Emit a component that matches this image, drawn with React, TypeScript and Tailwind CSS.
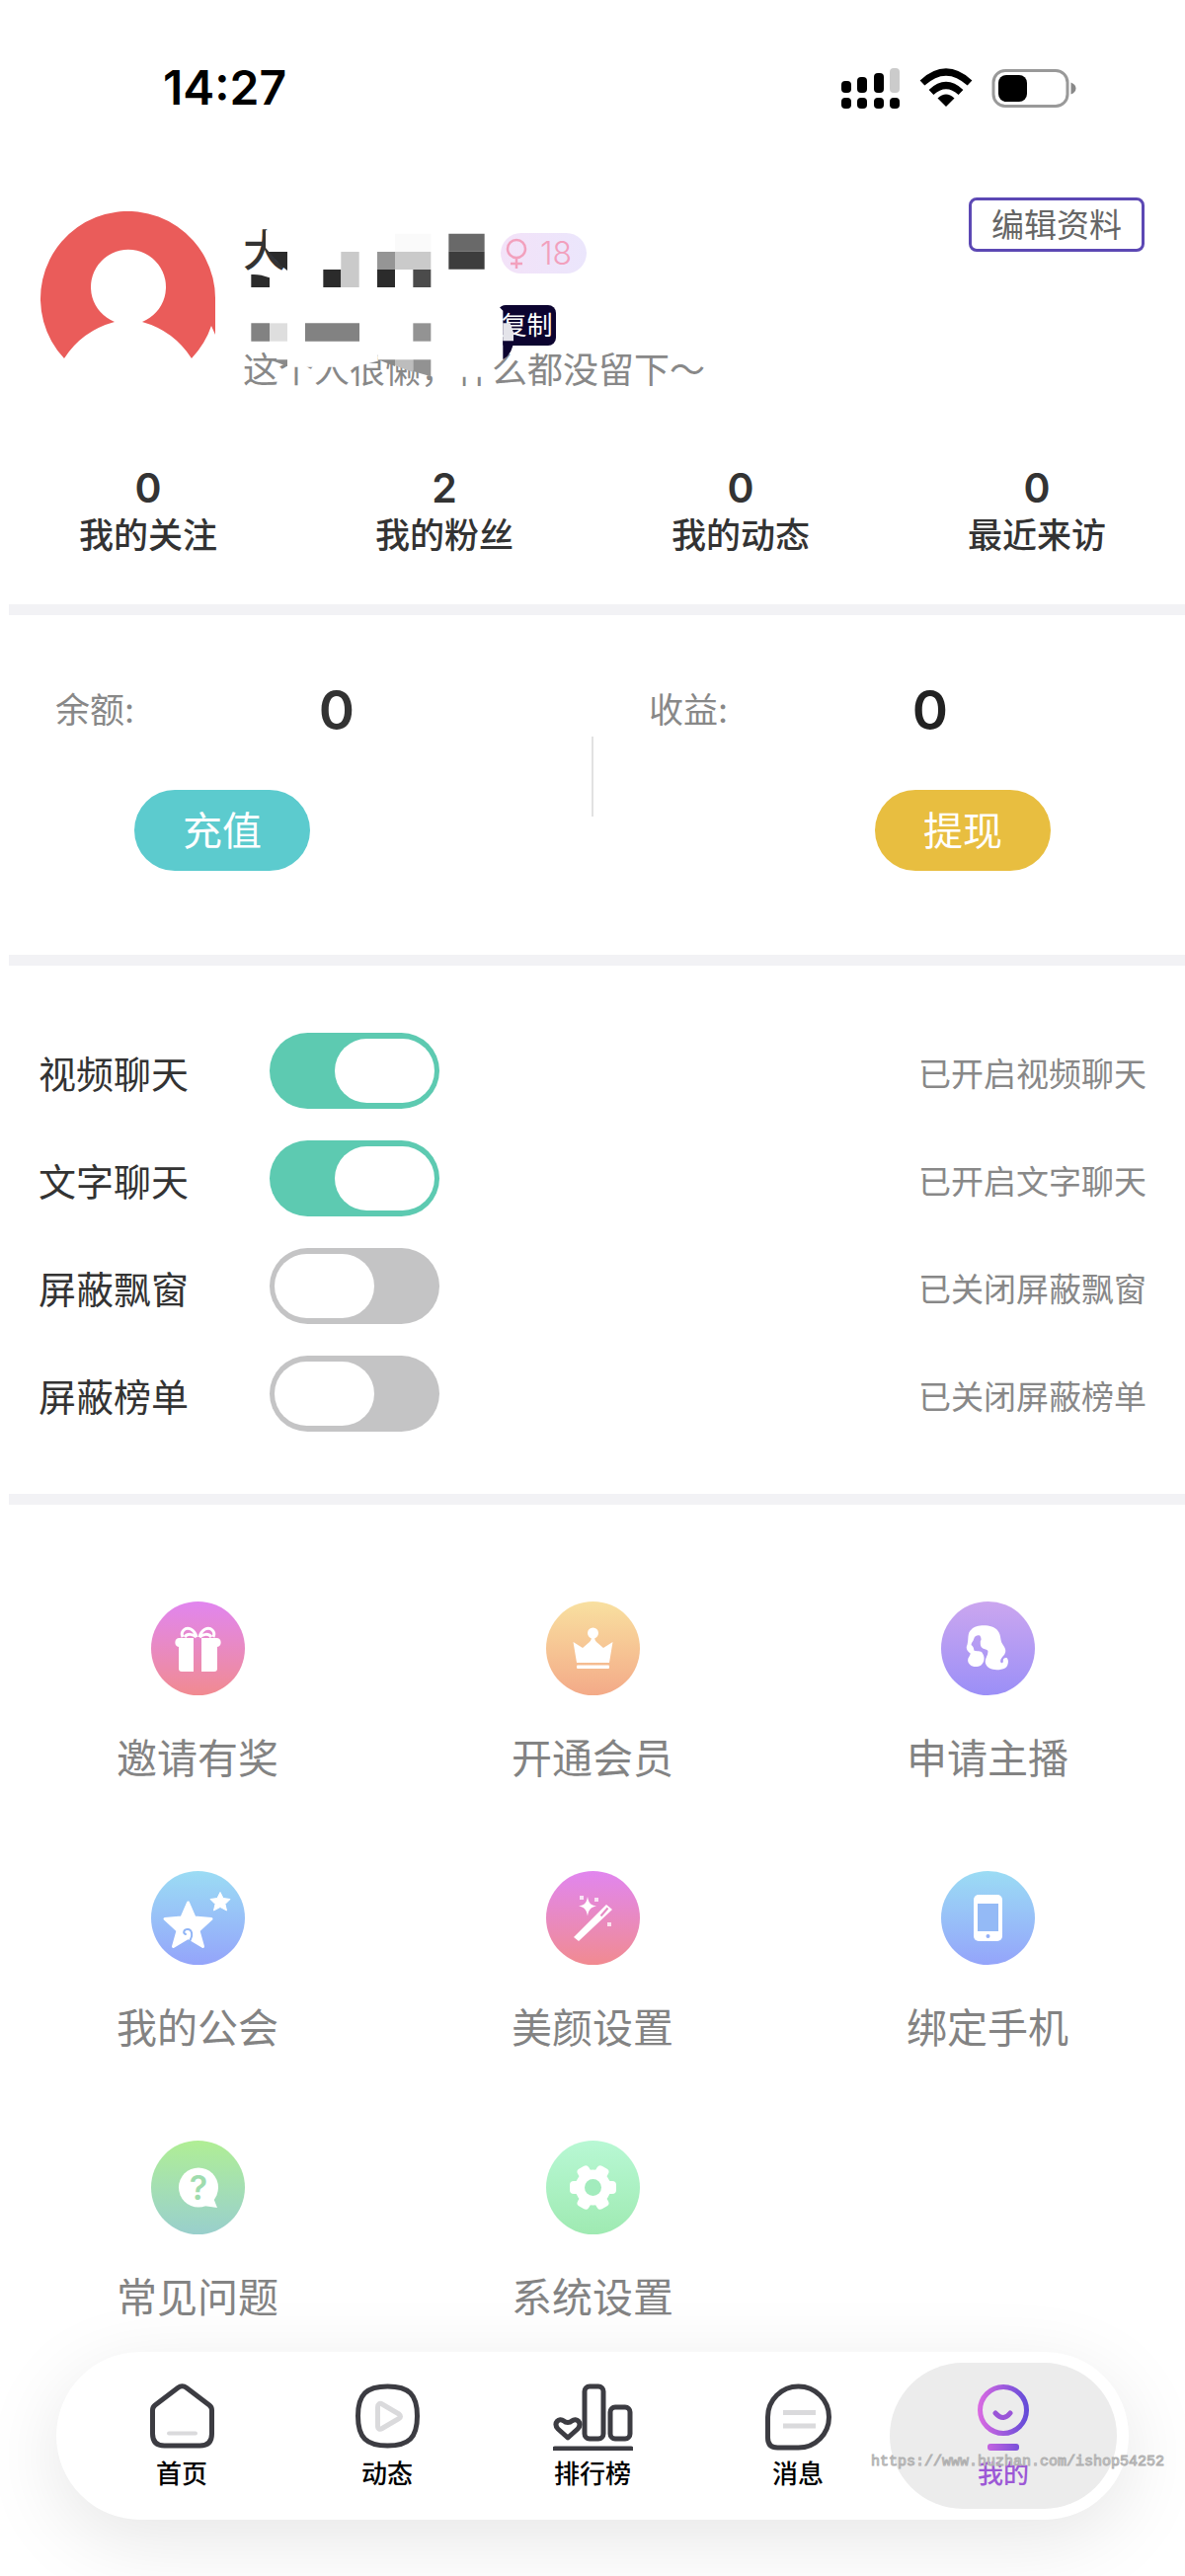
import { useState } from "react";
import type { ReactNode } from "react";
import clsx from "clsx";

const stats = [
  { label: "我的关注", value: 0 },
  { label: "我的粉丝", value: 2 },
  { label: "我的动态", value: 0 },
  { label: "最近来访", value: 0 },
];

const initialSwitches = [
  { id: "video", label: "视频聊天", on: true },
  { id: "text", label: "文字聊天", on: true },
  { id: "float", label: "屏蔽飘窗", on: false },
  { id: "rank", label: "屏蔽榜单", on: false },
];

const menu: { label: string; bg: string; icon: ReactNode }[] = [
  {
    label: "邀请有奖",
    bg: "from-[#e185ef] to-[#f18a90]",
    icon: (
      <>
        <path d="M28 37h15v34H31a3 3 0 0 1-3-3V46a4.600 4.600 0 0 1 0-9zM51 37h16a4.600 4.600 0 0 1 0 9v22a3 3 0 0 1-3 3H51z" fill="#fff" />
        <path d="M46 36c-2-8-9-11-13-7-2 2-2 5-1 7M49 36c2-8 9-11 13-7 2 2 2 5 1 7M34 36c3-4 8-3 12 0M61 36c-3-4-8-3-12 0" fill="none" stroke="#fff" strokeWidth="3" />
      </>
    ),
  },
  {
    label: "开通会员",
    bg: "from-[#f8e0a0] to-[#f3aa88]",
    icon: (
      <g fill="#fff">
        <circle cx="47.500" cy="32" r="5.500" />
        <path d="M27.500 41l9.500 6 7-6c2-2 2-4 2-6h3c0 2 0 4 2 6l7 6 9.500-6-3.500 21H31z" />
        <rect x="31" y="64.500" width="33" height="3.500" rx="1" />
      </g>
    ),
  },
  {
    label: "申请主播",
    bg: "from-[#cba6ef] to-[#9b8ff7]",
    icon: (
      <g transform="translate(-12.500 -12) scale(.3333)">
        <path
          d="M130 121c14-16 64-17 80 4 11 15 6 27 14 40 8 12 13 20 6 32-7 8-13 14-12 22 2 6 9 4 8-3-1-6 5-10 11-9 8 8 4 25-4 31-24 11-56 6-61-16-2-14 8-21 8-34 0-8-14-5-20-13-4-6-3-12-3-19 4-3 2-10-1-16-8-3-18 2-19 10-2 7-8 12-8 18 4 3 6 6 7 9l2 8c12 3 24 0 26 10 10 14 2 38-18 39-22 2-34-17-23-31l4-9c-12-7-15-18-10-27 5-15-1-36 13-46z"
          fill="#fff"
        />
      </g>
    ),
  },
  {
    label: "我的公会",
    bg: "from-[#9bdcf4] to-[#94a4fa]",
    icon: (
      <>
        <path
          d="M37.500 32l6.500 15 17 1.500-13 12 4.500 16-15-9-15 9 4.500-16-13-12L31 47z"
          fill="#fff"
          stroke="#fff"
          strokeWidth="3"
          strokeLinejoin="round"
        />
        <path d="M70 21.500l3 6 7 1-5 5 1.500 6.500-6.500-3.500-6.500 3.500 1.500-6.500-5-5 7-1z" fill="#fff" stroke="#fff" strokeWidth="1" strokeLinejoin="round" />
        <path d="M35 64c-3-1-2-5 2-5 5 0 5 7 3 10-1 2-2 3-1 5" fill="none" stroke="#8fb4f6" strokeWidth="2" strokeLinecap="round" />
      </>
    ),
  },
  {
    label: "美颜设置",
    bg: "from-[#e185ef] to-[#f18a90]",
    icon: (
      <g fill="#fff">
        <path d="M28 67L61 34l6 5-34 32z" />
        <path d="M62.500 37.500l-7 8" stroke="#e589c4" strokeWidth="2" />
        <path d="M42 26c1 6 3 8.500 9 9.500-6 1-8 4-9 10-1-6-3-9-9-10 6-1 8-3.500 9-9.500z" />
        <path d="M34 25h4v4h-4zM49 27h4v4h-4zM62 52h4v4h-4z" opacity=".75" />
      </g>
    ),
  },
  {
    label: "绑定手机",
    bg: "from-[#9bdcf4] to-[#94a4fa]",
    icon: (
      <>
        <rect x="33" y="24" width="29" height="47" rx="5" fill="#fff" />
        <path d="M37 33h21v28H37z" fill="#94baf6" />
        <circle cx="47.500" cy="66" r="2" fill="#94b0f8" />
      </>
    ),
  },
  {
    label: "常见问题",
    bg: "from-[#b0ee94] to-[#99cfcc]",
    icon: (
      <>
        <g fill="#fff">
          <circle cx="48" cy="47.500" r="20" />
          <path d="M63 58l4 10-14-2z" />
        </g>
        <text x="48" y="60" textAnchor="middle" className="fill-[#9fdcae] text-[34px] font-semibold">?</text>
      </>
    ),
  },
  {
    label: "系统设置",
    bg: "from-[#b8f8d4] to-[#9feab2]",
    icon: (
      <>
        <g fill="#fff">
          <circle cx="47.500" cy="47.500" r="18" />
          <rect x="24" y="41" width="47" height="13" rx="4" />
          <rect x="24" y="41" width="47" height="13" rx="4" transform="rotate(60 47.500 47.500)" />
          <rect x="24" y="41" width="47" height="13" rx="4" transform="rotate(120 47.500 47.500)" />
        </g>
        <circle cx="47.500" cy="47.500" r="8.500" fill="#a2ecbd" />
      </>
    ),
  },
];

const tabs: { label: string; width: number; icon: ReactNode }[] = [
  {
    label: "首页",
    width: 65,
    icon: (
      <>
        <path d="M28 4.500q4.500-3.500 9 0L60 22q2.500 2 2.500 5v24q0 12-12 12h-36q-12 0-12-12V27q0-3 2.500-5z" />
        <path d="M19 50.500h27" stroke="#dadadc" strokeWidth="4" />
      </>
    ),
  },
  {
    label: "动态",
    width: 65,
    icon: (
      <>
        <path d="M32.500 3C54 3 62.500 11 62.500 33S54 63 32.500 63 2.500 55 2.500 33 11 3 32.500 3z" />
        <path d="M22.500 24v19c0 3 2 4 4.500 2.500l17-10q3-2 0-4.500L27 21c-2.500-1.500-4.500 0-4.500 3z" stroke="#dadadc" />
      </>
    ),
  },
  {
    label: "排行榜",
    width: 81,
    icon: (
      <>
        <path d="M15 55L5 46c-5-6 1-12 6-8 2 2 6 2 8 0 5-4 11 2 6 8z" />
        <rect x="32" y="3" width="19" height="53" rx="5" />
        <rect x="58" y="24" width="20" height="32" rx="5" />
        <path d="M2 66h77" />
      </>
    ),
  },
  {
    label: "消息",
    width: 67,
    icon: (
      <>
        <path d="M2.500 34a31 31 0 1 1 31 31h-21q-10 0-10-10z" />
        <path d="M18 29.500h33M18 43h33" stroke="#dadadc" strokeWidth="5" strokeLinecap="butt" />
      </>
    ),
  },
  {
    label: "我的",
    width: 52,
    icon: (
      <>
        <defs>
          <linearGradient id="mine" gradientUnits="userSpaceOnUse" x1="0" y1="0" x2="52" y2="0">
            <stop offset="0" stopColor="#dc6ae2" />
            <stop offset="1" stopColor="#604bd8" />
          </linearGradient>
        </defs>
        <circle cx="26" cy="27" r="23.500" stroke="url(#mine)" />
        <path d="M18 30q8 9 15 0" stroke="#9a55d8" />
        <rect x="10" y="61" width="32" height="7" rx="3" fill="url(#mine)" stroke="none" />
      </>
    ),
  },
];

function StatusBar() {
  return (
    <div className="flex h-[178px] items-center justify-between pl-[165px] pr-[110px] text-black">
      <span className="text-[48px] leading-[60px] font-semibold">14:27</span>
      <svg width="240" height="44" viewBox="0 0 240 44" aria-hidden="true">
        <rect x="2" y="15" width="10" height="12" rx="4" />
        <rect x="18" y="11" width="10" height="16" rx="4" />
        <rect x="35" y="7" width="10" height="20" rx="4" />
        <rect x="51" y="2" width="10" height="25" rx="4" fill="#cbcbcb" />
        <rect x="2" y="32" width="10" height="11" rx="4" />
        <rect x="18" y="32" width="10" height="11" rx="4" />
        <rect x="35" y="32" width="10" height="11" rx="4" />
        <rect x="51" y="32" width="10" height="11" rx="4" />
        <path d="M84 17Q108-5 132 17M93 26.500q15-14 30 0" fill="none" stroke="#000" strokeWidth="7" />
        <path d="M99.500 32.500q8.500-8 17 0L108 41z" />
        <rect x="156" y="4.500" width="75" height="36" rx="12" fill="#fff" stroke="#999" strokeWidth="3" />
        <rect x="161" y="9" width="29" height="27" rx="8" />
        <path d="M234.500 16.500q5 2 5 6t-5 6z" fill="#888" />
      </svg>
    </div>
  );
}

// pixel blocks laid over the nickname, the id and part of the signature
function Mosaic() {
  return (
    <svg className="pointer-events-none absolute top-[20px] left-[240px]" width="380" height="190" viewBox="0 0 1140 570" aria-hidden="true">
      <path d="M87 40h73v65H97l-10-12zM20 174h140v20H20z" fill="#fff" />
      <path d="M97 105h56v57l-20-16q-22-18-36-41zM43 174q26-2 56 10v29H43zM262 159h54v54h-54zM426 159h54v54h-54z" fill="#2b2b2b" />
      <path d="M316 105h55v108h-55zM480 105h109v54H480z" fill="#cacaca" />
      <path d="M480 50h109v55H480z" fill="#fafafa" />
      <path d="M426 105h54v54h-54z" fill="#959595" />
      <path d="M535 159h54v54h-54z" fill="#4b4b4b" />
      <path d="M643 50h109v54H643z" fill="#696969" />
      <path d="M643 104h109v54H643z" fill="#3d3d3d" />
      <path d="M43 322h56v55H43zM207 322h165v55H207z" fill="#828282" />
      <path d="M99 322h54v55H99z" fill="#dedede" />
      <path d="M535 322h54v55h-54z" fill="#939393" />
      <path d="M153 395h274v42l-70 18H153zM425 395h355v90H600l-11-2-160-50z" fill="#fff" />
      <path d="M99 433h54v20zM429 433h51v20z" fill="#8a8a8a" />
      <path d="M480 433h55v38l-55-20z" fill="#bdbdbd" />
      <path d="M535 433h54v51l-54-16z" fill="#929292" />
      <path d="M780 250l12 18 16 16v150h-28z" fill="#fff" />
      <path d="M808 375h32q-2 40-32 57z" fill="#0c0430" />
      <path d="M808 322h22l10 28v26h-32z" fill="#e4e4ea" />
    </svg>
  );
}

function Divider() {
  return <div className="ml-[9px] h-[11px] bg-[#f2f2f5]" />;
}

export default function App() {
  const [switches, setSwitches] = useState(initialSwitches);
  const [active, setActive] = useState("我的");

  const toggle = (id: string) => setSwitches(s => s.map(x => (x.id === id ? { ...x, on: !x.on } : x)));

  return (
    <div className="overflow-hidden bg-white pb-[57px] font-['Inter','Noto_Sans_CJK_SC',sans-serif] text-[#333]">
      <StatusBar />

      <section className="relative mt-[22px] flex pr-[41px] pl-[41px]">
        <svg className="mt-[14px] shrink-0" width="177" height="150" viewBox="0 0 177 150" role="img" aria-label="头像">
          <path d="M24 149A88.500 88.500 0 1 1 177 89v36l-4-9q-6 18-20 33-18-28-50-37a38 38 0 1 0-28 0q-33 9-51 37z" fill="#ea5c5a" />
        </svg>
        <div className="ml-[28px]">
          <div className="mt-[36px] flex h-[42px] items-start">
            <span className="text-[44px] leading-[36px] font-medium">大</span>
            <span className="ml-[217px] flex h-[41px] items-center gap-[13px] rounded-full bg-linear-to-r from-[#f3e2f8] to-[#ebe6fc] pr-[15px] pl-[5px] text-[32px] leading-[40px] font-light text-[#f2a0bd]">
              <svg width="22" height="32" viewBox="0 0 22 32" fill="none" stroke="#f2a0bd" strokeWidth="2.500" aria-hidden="true">
                <circle cx="11" cy="11" r="9" />
                <path d="M11 20v11M5 26h12" />
              </svg>
              18
            </span>
          </div>
          <button type="button" className="mt-[31px] ml-[258px] block h-[41px] w-[59px] rounded-lg bg-[#0c0430] text-[26px] leading-[40px] whitespace-nowrap text-white">
            复制
          </button>
          <p className="mt-[7px] text-[36px] leading-[36px] whitespace-nowrap text-[#888]">这个人很懒，什么都没留下～</p>
        </div>
        <button type="button" className="absolute top-0 right-[41px] h-[55px] w-[178px] rounded-lg border-3 border-[#5c48b4] text-[33px] leading-[48px] text-[#666]">
          编辑资料
        </button>
        <Mosaic />
      </section>

      <section className="mt-[77px] grid grid-cols-4 pb-[46px] text-center">
        {stats.map(s => (
          <a key={s.label} href="#" className="font-medium">
            <span className="block text-[41px] leading-[48px] font-semibold">{s.value}</span>
            <span className="block text-[35px] leading-[48px]">{s.label}</span>
          </a>
        ))}
      </section>

      <Divider />

      <section className="flex pt-[71px] pb-[85px]">
        <div className="flex-1">
          <div className="flex h-[50px] items-center pl-[56px]">
            <span className="w-[200px] text-[35px] text-[#888]">余额:</span>
            <span className="w-[170px] text-center text-[55px] leading-[50px] font-semibold">0</span>
          </div>
          <button type="button" className="mt-[56px] ml-[136px] h-[82px] w-[178px] rounded-full bg-[#5ccbce] pt-[2px] text-[40px] text-white">充值</button>
        </div>
        <div className="mt-[52px] h-[81px] w-[2px] bg-[#e2e2e2]" />
        <div className="flex-1">
          <div className="flex h-[50px] items-center pl-[56px]">
            <span className="w-[200px] text-[35px] text-[#888]">收益:</span>
            <span className="w-[170px] text-center text-[55px] leading-[50px] font-semibold text-[#222]">0</span>
          </div>
          <button type="button" className="mt-[56px] ml-[285px] h-[82px] w-[178px] rounded-full bg-[#e8be40] pt-[2px] text-[40px] text-white">提现</button>
        </div>
      </section>

      <Divider />

      <section className="pt-[52px] pb-[47px]">
        {switches.map(s => (
          <div key={s.id} className="flex h-[109px] items-center px-[39px]">
            <label htmlFor={s.id} className="w-[234px] pt-[6px] text-[38px] leading-[48px]">{s.label}</label>
            <input
              id={s.id}
              type="checkbox"
              role="switch"
              checked={s.on}
              onChange={() => toggle(s.id)}
              className="h-[77px] w-[172px] appearance-none rounded-full bg-[#c4c4c5] px-[5px] py-[6px] before:block before:h-[65px] before:w-[101px] before:rounded-full before:bg-white checked:bg-[#5dcab1] checked:before:ml-auto"
            />
            <span className="ml-auto pt-[6px] text-[33px] leading-[48px] text-[#888]">
              {s.on ? "已开启" : "已关闭"}{s.label}
            </span>
          </div>
        ))}
      </section>

      <Divider />

      <section className="grid grid-cols-3 gap-y-[90px] pt-[98px]">
        {menu.map(m => (
          <a key={m.label} href="#" className="flex flex-col items-center">
            <span className={clsx("size-[95px] rounded-full bg-linear-to-b", m.bg)}>
              <svg width="95" height="95" viewBox="0 0 95 95" aria-hidden="true">{m.icon}</svg>
            </span>
            <span className="mt-[40px] text-[41px] leading-[48px] text-[#838383]">{m.label}</span>
          </a>
        ))}
      </section>

      <nav className="relative mx-[57px] mt-[31px] grid h-[170px] grid-cols-5 items-center rounded-full bg-white px-[23px] shadow-[0_20px_80px_rgba(0,0,0,0.1)]">
        {tabs.map(t => (
          <button
            key={t.label}
            type="button"
            onClick={() => setActive(t.label)}
            className={clsx(
              "-mx-[11px] flex h-[148px] flex-col items-center rounded-full pt-[21px] text-[26px] leading-[36px] font-medium",
              active === t.label ? "bg-[#ececec] text-[#9c58d6]" : "text-black"
            )}
          >
            <svg width={t.width} height="68" viewBox={`0 0 ${t.width} 68`} fill="none" stroke="#3c3c42" strokeWidth="5" strokeLinecap="round" strokeLinejoin="round" aria-hidden="true">
              {t.icon}
            </svg>
            <span className="mt-[6px]">{t.label}</span>
          </button>
        ))}
        <span className="pointer-events-none absolute top-[102px] -right-[36px] font-['Liberation_Mono',monospace] text-[15px] leading-[20px] text-[#e4e4e4] [-webkit-text-stroke:1px_#b0b0b0]">
          https://www.huzhan.com/ishop54252
        </span>
      </nav>
    </div>
  );
}
